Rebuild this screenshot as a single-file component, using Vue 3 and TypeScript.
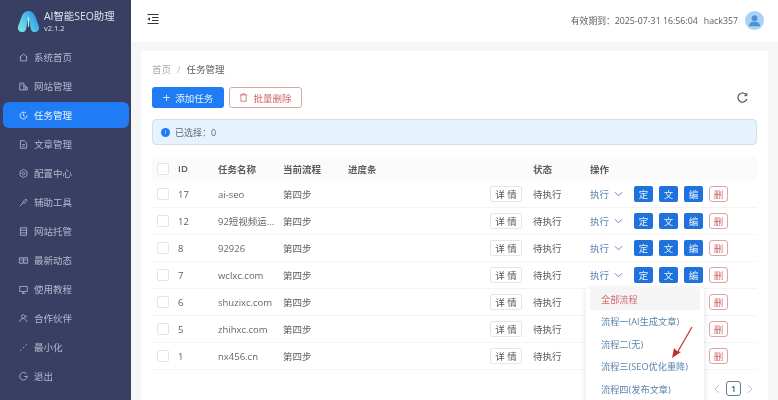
<script setup lang="ts">
interface NavItem { label: string; icon: string }
const nav: NavItem[] = [
  { label: '系统首页', icon: 'M2.500 7.500L8 3l5.500 4.500M3.500 7v6h9V7' },
  { label: '网站管理', icon: 'M2.500 3h6v10h-6zM8.500 7H11v6H8.500M11 9h2.500v4H11M4.500 6h2' },
  { label: '任务管理', icon: 'M13 8a5 5 0 1 1-1.500-3.500M8 5v3.200l2 1.200' },
  { label: '文章管理', icon: 'M3.500 2.500h6l3 3v8h-9zM6 8h4M6 10.500h4' },
  { label: '配置中心', icon: 'M8 2l5 3v6l-5 3-5-3V5zM8 6a2 2 0 1 0 .01 0' },
  { label: '辅助工具', icon: 'M2.500 13.500l5-5M6.500 7.500l2 2 4.500-4-1.500-2.500z' },
  { label: '网站托管', icon: 'M3.500 2.500h9v11h-9zM3.500 6h9M3.500 10h9' },
  { label: '最新动态', icon: 'M2 4h5.500v8H2zM8.500 4H14v8H8.500zM3.500 7h2.500M10 7h2.500' },
  { label: '使用教程', icon: 'M2.500 3.500h11v7.500h-11zM8 11v2.500M5.500 13.500h5' },
  { label: '合作伙伴', icon: 'M7.500 2.500a2.500 2.500 0 1 0 .01 0M2.500 13c.5-3 2.500-5 5-5s4 1.500 5.500 5M11 3.500l1.500 3' },
  { label: '最小化', icon: 'M3 13l2-2M7 9l2-2M11 5l2-2' },
  { label: '退出', icon: 'M12.500 4.500A5.500 5.500 0 1 0 13.500 8H9' },
]
const activeLabel = '任务管理'
interface Task { id: number; name: string; covered: boolean }
const tasks: Task[] = [
  { id: 17, name: 'ai-seo', covered: false },
  { id: 12, name: '92短视频运...', covered: false },
  { id: 8, name: '92926', covered: false },
  { id: 7, name: 'wclxc.com', covered: false },
  { id: 6, name: 'shuzixc.com', covered: true },
  { id: 5, name: 'zhihxc.com', covered: true },
  { id: 1, name: 'nx456.cn', covered: true },
]
const flows: string[] = ['全部流程', '流程一(AI生成文章)', '流程二(无)', '流程三(SEO优化重降)', '流程四(发布文章)']
const actions: string[] = ['定', '文', '编']
</script>

<template>
  <div class="app">
    <aside class="side">
      <div class="brand">
        <svg class="logo" viewBox="0 0 24 24" width="23" height="23">
          <defs>
            <linearGradient id="lg" x1="0" y1="1" x2="1" y2="0.300">
              <stop offset="0" stop-color="#7fe6e4" />
              <stop offset="0.500" stop-color="#55c6ea" />
              <stop offset="1" stop-color="#2f8fe6" />
            </linearGradient>
          </defs>
          <path d="M12 1c3.500 0 5.500 2 7 5.500l3.800 10.500c1 3.500-1 6-4 6-2.300 0-3.600-1-4.300-3L12.800 11h-1.600L9.500 20c-.7 2-2 3-4.300 3-3 0-5-2.500-4-6L5 6.500C6.500 3 8.500 1 12 1z" fill="url(#lg)" />
          <path d="M12 8v9" stroke="#c8f2f5" stroke-width="1.200" stroke-linecap="round" />
        </svg>
        <div class="brand-text">
          <div class="brand-name">AI智能SEO助理</div>
          <div class="brand-ver">v2.1.2</div>
        </div>
      </div>
      <nav class="nav">
        <div v-for="item in nav" :key="item.label" class="nav-item" :class="{ active: item.label === activeLabel }">
          <svg viewBox="0 0 16 16" width="11" height="11" fill="none" stroke="currentColor" stroke-width="1.200">
            <path :d="item.icon" />
          </svg>
          <span>{{ item.label }}</span>
        </div>
      </nav>
    </aside>

    <main class="main">
      <header class="top">
        <svg class="fold" viewBox="0 0 12 12" width="12" height="12" fill="none" stroke="#333" stroke-width="1.100">
          <path d="M0.500 1.500h11M5 4.500h6.500M5 7.500h6.500M0.500 10.500h11" />
          <path d="M3 4.200v3.600L0.500 6z" fill="#333" stroke="none" />
        </svg>
        <div class="top-right">
          <span>有效期到：2025-07-31 16:56:04</span>
          <span>hack357</span>
          <span class="avatar">
            <svg viewBox="0 0 20 20" width="13" height="13" fill="#4b93d6">
              <circle cx="10" cy="6.500" r="4.500" />
              <path d="M1.500 19c0-5 3.500-7 8.500-7s8.500 2 8.500 7z" />
            </svg>
          </span>
        </div>
      </header>

      <section class="content">
        <div class="card">
          <div class="crumb"><span class="crumb-home">首页</span><span class="crumb-sep">/</span><span>任务管理</span></div>
          <div class="toolbar">
            <button class="btn primary"><span class="plus">+</span>添加任务</button>
            <button class="btn danger">
              <svg viewBox="0 0 12 12" width="9" height="9" fill="none" stroke="#c25b5b" stroke-width="1">
                <path d="M1 2.500h10M4.500 2.500V1h3v1.500M2.500 2.500v8.500h7V2.500" />
              </svg>
              批量删除
            </button>
            <svg class="refresh" viewBox="0 0 12 12" width="11" height="11" fill="none" stroke="#444" stroke-width="1.200">
              <path d="M10.300 3.500A5 5 0 1 0 10.800 7.500" />
              <path d="M10.800 1v3H8" stroke-width="1" />
            </svg>
          </div>
          <div class="alert"><span class="info">i</span>已选择：0</div>

          <div class="table">
            <div class="row head">
              <span class="cell-check"><i class="check"></i></span>
              <span>ID</span><span>任务名称</span><span>当前流程</span><span class="progress">进度条</span>
              <span></span><span>状态</span><span>操作</span>
            </div>
            <div v-for="t in tasks" :key="t.id" class="row">
              <span class="cell-check"><i class="check"></i></span>
              <span>{{ t.id }}</span>
              <span class="name">{{ t.name }}</span>
              <span>第四步</span>
              <span></span>
              <span><button class="detail">详 情</button></span>
              <span>待执行</span>
              <span class="ops">
                <span class="exec" :class="{ covered: t.covered }">执行
                  <svg viewBox="0 0 10 6" width="9" height="6" fill="none" stroke="#4f7fb8" stroke-width="1"><path d="M1 1l4 4 4-4" /></svg>
                </span>
                <button v-for="a in actions" :key="a" class="mini" :class="{ covered: t.covered }">{{ a }}</button>
                <button class="mini del">删</button>
              </span>
            </div>
          </div>

          <div class="pager">
            <svg viewBox="0 0 6 10" width="6" height="10" fill="none" stroke="#c4c4c8" stroke-width="1"><path d="M5 1L1 5l4 4" /></svg>
            <span class="pg-num">1</span>
            <svg viewBox="0 0 6 10" width="6" height="10" fill="none" stroke="#c4c4c8" stroke-width="1"><path d="M1 1l4 4-4 4" /></svg>
          </div>
        </div>
      </section>

      <div class="drop">
        <div v-for="(f, i) in flows" :key="f" class="drop-item" :class="{ first: i === 0 }">{{ f }}</div>
      </div>
      <svg class="arrow" viewBox="0 0 24 34" width="24" height="34">
        <path d="M21 1L6 27" stroke="#c0302b" stroke-width="1.200" fill="none" />
        <path d="M1 32l2-10 3 3 4 1z" fill="#c0302b" />
      </svg>
    </main>
  </div>
</template>

<style>
html, body { margin: 0; padding: 0; }
</style>

<style scoped>
.app {
  display: flex;
  width: 778px;
  height: 400px;
  overflow: hidden;
  font-family: "Open Sans", "Noto Sans CJK SC", sans-serif;
  font-size: 9.500px;
  color: #5c5c5c;
  background: #f6f6f7;
  filter: blur(0.3px);
}
.side { width: 131px; flex: none; background: #393e63; color: #b4b8cc; }
.brand { display: flex; align-items: center; height: 42px; padding-left: 17px; gap: 4px; }
.logo { flex: none; }
.brand-text { color: #dfe2ee; line-height: 1.100; margin-top: 1px; }
.brand-name { font-size: 10.400px; white-space: nowrap; }
.brand-ver { font-size: 7.500px; margin-top: 1px; }
.nav { display: flex; flex-direction: column; gap: 3px; padding: 2px 2px 0 3px; }
.nav-item { display: flex; align-items: center; gap: 5px; height: 26px; padding-left: 15px; border-radius: 6px; }
.nav-item.active { background: #1f7cf4; color: #eef5ff; }
.main { position: relative; flex: 1; min-width: 0; display: flex; flex-direction: column; }
.top { height: 42px; flex: none; background: #fff; display: flex; align-items: center; justify-content: space-between; padding: 0 14px 1px 16px; box-sizing: border-box; }
.fold { margin-bottom: 4px; }
.top-right { display: flex; align-items: center; gap: 6px; font-size: 8.800px; }
.avatar { width: 19px; height: 19px; border-radius: 50%; background: #a9d2f5; display: flex; align-items: center; justify-content: center; overflow: hidden; margin-left: 1px; }
.content { flex: 1; padding: 9px 10px 0; min-height: 0; }
.card { background: #fff; height: 100%; padding: 0 11px; box-sizing: border-box; }
.crumb { display: flex; align-items: center; height: 36px; gap: 6px; }
.crumb-home { color: #aaa; }
.crumb-sep { color: #bbb; }
.toolbar { display: flex; align-items: center; gap: 5px; height: 21px; }
.btn { height: 21px; box-sizing: border-box; border-radius: 3px; font: inherit; display: flex; align-items: center; justify-content: center; padding: 0; }
.primary { width: 72px; background: #1f7cf4; border: none; color: #e8f2ff; gap: 5px; }
.plus { font-size: 13px; line-height: 1; }
.danger { width: 73px; background: #fff; border: 1px solid #d9a5a8; color: #d0686b; gap: 5px; }
.refresh { margin-left: auto; margin-right: 9px; }
.alert { display: flex; align-items: center; gap: 5px; height: 26px; margin-top: 11px; padding-left: 8px; box-sizing: border-box; background: #e6f3fc; border: 1px solid #cfe0ec; border-radius: 4px; color: #5a6b78; font-size: 9px; }
.info { width: 9px; height: 9px; border-radius: 50%; background: #1f7cf4; color: #fff; font-size: 6px; line-height: 9px; text-align: center; }
.table { margin-top: 11px; }
.row { display: grid; grid-template-columns: 26px 40px 65px 65px 142px 43px 57px 1fr; align-items: center; height: 27px; border-bottom: 1px solid #f4f4f5; box-sizing: border-box; }
.row.head { height: 25px; background: #fbfbfb; font-weight: 600; border-bottom: none; }
.cell-check { display: flex; padding-left: 5px; }
.check { width: 10px; height: 10px; border: 1px solid #e4e4e6; border-radius: 2px; background: #fff; display: block; }
.name { white-space: nowrap; padding-right: 8px; color: #666; }
.detail { width: 32px; height: 16px; padding: 0; border: 1px solid #e6e6e8; border-radius: 2px; background: #fff; font: inherit; color: #555; }
.ops { display: flex; align-items: center; }
.exec { display: flex; align-items: center; gap: 5px; width: 44px; color: #5d86b8; }
.mini { width: 19px; height: 16px; padding: 0; margin-right: 6px; border: none; border-radius: 2px; background: #1f72dc; color: #e8f2ff; font: inherit; }
.mini.del { background: #fff; border: 1px solid #d9a5a8; border-radius: 3px; color: #d0686b; }
.covered { visibility: hidden; }
.pager { position: absolute; top: 381px; left: 583px; display: flex; align-items: center; gap: 6px; }
.pg-num { width: 15px; height: 15px; box-sizing: border-box; border: 1px solid #5d7f95; border-radius: 3px; color: #3d5f78; font-size: 9px; font-weight: 600; display: flex; align-items: center; justify-content: center; }
.drop { position: absolute; left: 455px; top: 288px; width: 118px; height: 120px; padding: 0 4px; box-sizing: border-box; background: #fff; box-shadow: 0 1px 6px rgba(0, 0, 0, .12); border-radius: 3px; font-size: 9.200px; color: #5b84ab; }
.drop-item { height: 22.400px; line-height: 24px; padding-left: 11px; white-space: nowrap; }
.drop-item.first { background: #f5f5f6; color: #cf6a6d; }
.arrow { position: absolute; left: 540px; top: 326px; }
</style>
